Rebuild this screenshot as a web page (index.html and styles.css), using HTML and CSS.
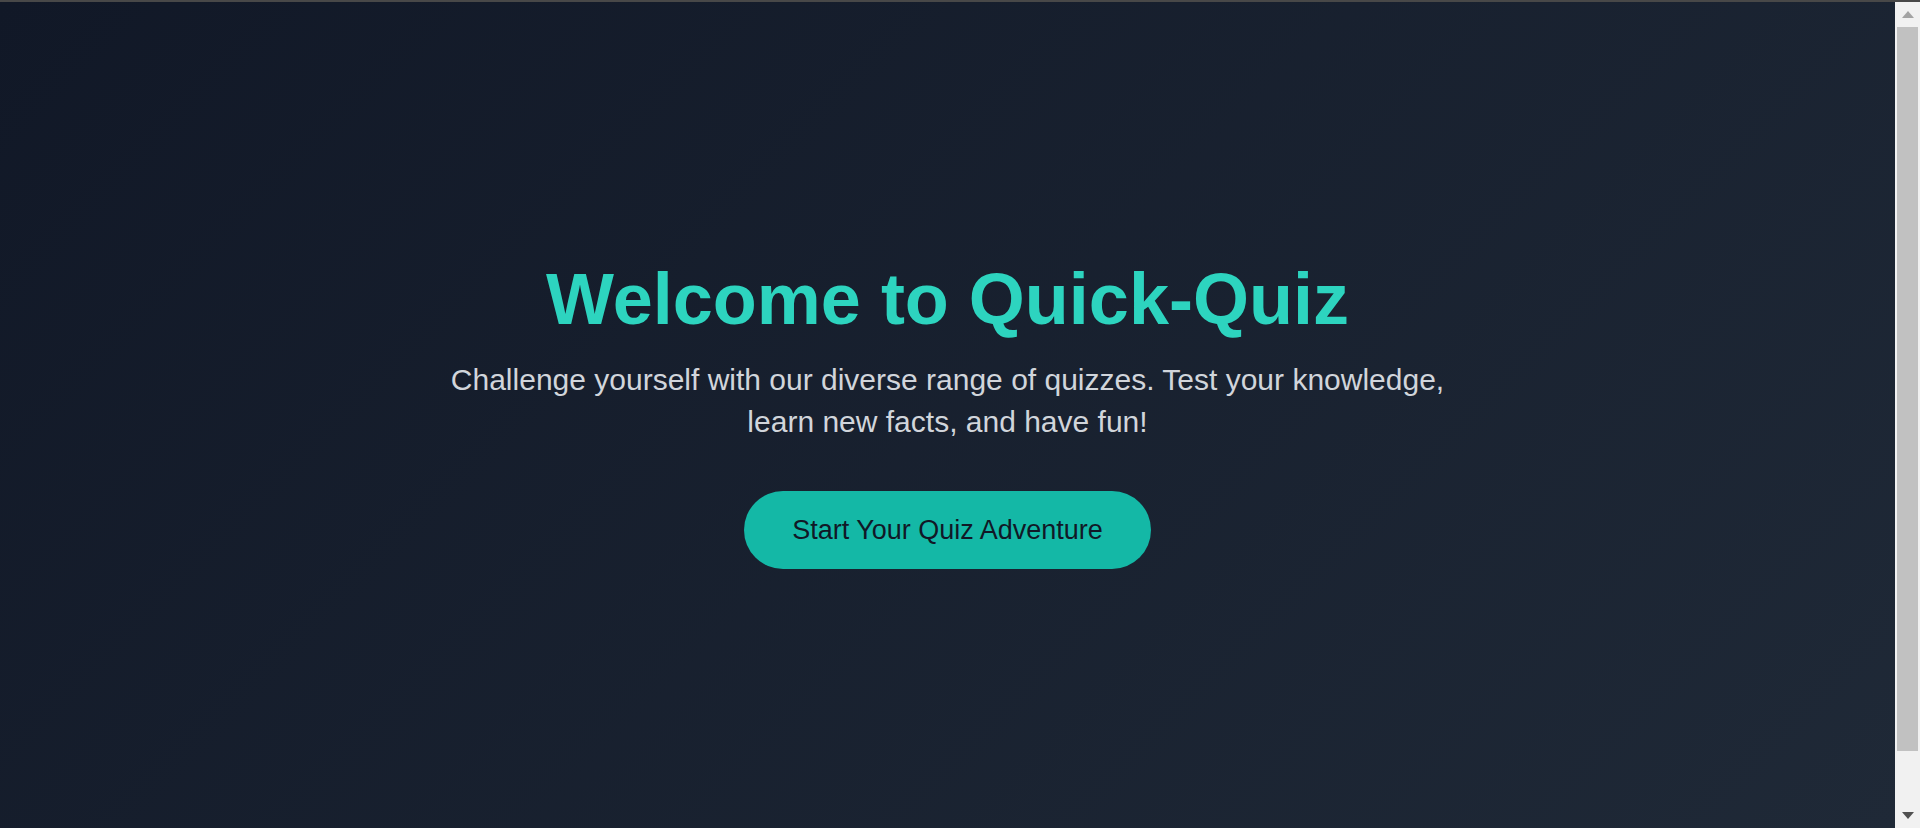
FILE: index.html
```html
<!DOCTYPE html>
<html lang="en">
<head>
<meta charset="utf-8">
<title>Quick-Quiz</title>
<link rel="stylesheet" href="styles.css">
</head>
<body>
  <div class="frame-line"></div>
  <div class="window">
    <main class="page">
      <section class="hero">
        <h1 class="hero-title">Welcome to Quick-Quiz</h1>
        <p class="hero-text">Challenge yourself with our diverse range of quizzes. Test your knowledge, learn new facts, and have fun!</p>
        <button class="hero-button" type="button">Start Your Quiz Adventure</button>
      </section>
    </main>
    <div class="scrollbar" aria-hidden="true">
      <div class="scroll-btn">
        <svg width="12" height="7" viewBox="0 0 12 7"><path d="M6 0 L12 7 L0 7 Z" fill="#a3a3a3"/></svg>
      </div>
      <div class="scroll-track">
        <div class="scroll-thumb"></div>
      </div>
      <div class="scroll-btn">
        <svg width="12" height="7" viewBox="0 0 12 7"><path d="M0 0 L12 0 L6 7 Z" fill="#505050"/></svg>
      </div>
    </div>
  </div>
</body>
</html>
```

FILE: styles.css
```css
html, body {
  margin: 0;
  height: 100%;
}

body {
  display: flex;
  flex-direction: column;
  overflow: hidden;
  font-family: "Liberation Sans", Arial, sans-serif;
  background: #111827;
}

.frame-line {
  height: 2px;
  flex: none;
  background: #484848;
}

.window {
  flex: 1;
  display: flex;
  min-height: 0;
}

.page {
  flex: 1;
  display: flex;
  padding-bottom: 4px;
  background: linear-gradient(135deg, #111827 0%, #1f2937 100%);
}

.hero {
  flex: 1;
  display: flex;
  flex-direction: column;
  align-items: center;
  justify-content: center;
  text-align: center;
}

.hero-title {
  margin: 0 0 18px;
  font-size: 72px;
  font-weight: 700;
  line-height: 84px;
  color: #2dd4bf;
}

.hero-text {
  margin: 0 0 48px;
  max-width: 1000px;
  font-size: 30px;
  line-height: 42px;
  color: #d1d5db;
}

.hero-button {
  border: none;
  border-radius: 9999px;
  padding: 23px 48px;
  background: #14b8a6;
  color: #111827;
  font-family: "Liberation Sans", Arial, sans-serif;
  font-size: 27px;
  line-height: 32px;
  cursor: pointer;
}

.scrollbar {
  width: 25px;
  flex: none;
  display: flex;
  flex-direction: column;
  background: #f1f1f1;
}

.scroll-btn {
  height: 25px;
  flex: none;
  display: flex;
  align-items: center;
  justify-content: center;
}

.scroll-btn svg {
  display: block;
}

.scroll-track {
  flex: 1;
  padding: 0 2px;
}

.scroll-thumb {
  height: 724px;
  background: #c1c1c1;
}
```
